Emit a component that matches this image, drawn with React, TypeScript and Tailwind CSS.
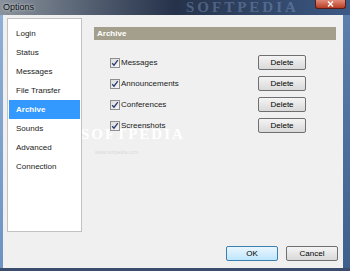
import React from "react";

const items = ["Login", "Status", "Messages", "File Transfer", "Archive", "Sounds", "Advanced", "Connection"];
const archives = ["Messages", "Announcements", "Conferences", "Screenshots"];

function Check() {
  return (
    <span className="flex h-[10px] w-[10px] items-center justify-center border border-[#8e8f8f] bg-gradient-to-br from-[#dcdcdc] to-[#f6f6f6]">
      <svg width="8" height="8" viewBox="0 0 8 8">
        <path d="M1.2 4.2 L3 6.2 L6.8 1.2" fill="none" stroke="#2a3a6e" strokeWidth="1.3" />
      </svg>
    </span>
  );
}

function Btn({ label, primary, w }: { label: string; primary?: boolean; w: string }) {
  return (
    <button
      className={`flex h-[15px] ${w} items-center justify-center rounded-[2px] border text-[8px] text-black ${
        primary
          ? "border-[#3c7fb1] bg-gradient-to-b from-[#eaf6fd] to-[#bee6fd]"
          : "border-[#707070] bg-gradient-to-b from-[#f4f4f4] to-[#d9d9d9]"
      }`}
    >
      {label}
    </button>
  );
}

export default function App() {
  return (
    <div
      className="relative flex h-[271px] w-[350px] flex-col overflow-hidden bg-[#2b3d5e]"
      style={{ fontFamily: '"Liberation Sans", Arial, sans-serif' }}
    >
      {/* title bar */}
      <div className="relative flex h-[15px] items-start bg-gradient-to-r from-[#8a939c] via-[#26324a] to-[#3c5a86]">
        <span className="relative z-10 pl-[3px] pt-[2px] text-[9px] leading-[10px] text-[#101010] [text-shadow:0_0_3px_#e8eef4]">
          Options
        </span>
        <span
          className="absolute left-[186px] top-[0px] text-[15px] leading-[15px] font-bold tracking-[3px] text-[#8aa6cc]/40"
          style={{ fontFamily: '"Liberation Serif", serif' }}
        >
          SOFTPEDIA
        </span>
        <div className="absolute right-[4px] top-0 flex h-[9px] w-[31px] items-center justify-center rounded-b-[3px] border border-t-0 border-[#5b1e16] bg-gradient-to-b from-[#e08a78] to-[#b83a22]">
          <svg width="7" height="6" viewBox="0 0 7 6">
            <path d="M1 0.5 L6 5.5 M6 0.5 L1 5.5" stroke="#ffffff" strokeWidth="1.4" />
          </svg>
        </div>
      </div>

      <div className="flex flex-1">
        <div className="w-[3px] bg-gradient-to-b from-[#8fb0d6] to-[#6c93c4]" />
        <div className="relative flex h-[253px] w-[340px] flex-col bg-[#f0f0f0]">
          {/* watermark, drawn under the content */}
          <span
            className="absolute left-[78px] top-[112px] text-[15px] leading-[15px] font-bold tracking-[2px] text-white"
            style={{ fontFamily: '"Liberation Serif", serif' }}
          >
            SOFTPEDIA
          </span>
          <span className="absolute left-[92px] top-[134px] text-[5px] leading-[6px] text-[#dadada]">www.softpedia.com</span>

          <div className="relative flex flex-1 pt-[3px] pl-[4px]">
            {/* left list */}
            <div className="flex h-[214px] w-[75px] flex-col border border-[#c2c2c2] bg-white pt-[5px]">
              {items.map((it) => (
                <div
                  key={it}
                  className={`mx-[1px] flex h-[19px] items-center pl-[7px] text-[8px] ${
                    it === "Archive" ? "bg-[#3399ff] font-bold text-white" : "text-[#1a1a1a]"
                  }`}
                >
                  {it}
                </div>
              ))}
            </div>

            {/* right panel */}
            <div className="ml-[12px] flex w-[242px] flex-col pt-[9px]">
              <div className="flex h-[13px] items-center bg-[#a49f8d] pl-[3px] text-[8px] font-bold text-white">
                Archive
              </div>
              <div className="mt-[12px] flex flex-col">
                {archives.map((a) => (
                  <div key={a} className="flex h-[21px] items-center">
                    <div className="ml-[16px] flex items-center gap-[1px]">
                      <Check />
                      <span className="text-[8px] text-[#1a1a1a]">{a}</span>
                    </div>
                    <div className="ml-auto mr-[30px]">
                      <Btn label="Delete" w="w-[48px]" />
                    </div>
                  </div>
                ))}
              </div>
            </div>
          </div>

          <div className="relative flex justify-end gap-[8px] pb-[7px] pr-[5px]">
            <Btn label="OK" primary w="w-[52px]" />
            <Btn label="Cancel" w="w-[52px]" />
          </div>
        </div>
        <div className="flex-1 bg-gradient-to-b from-[#5d7fae] to-[#3f5f8c]" />
      </div>
      <div className="h-[3px] bg-[#3a4d6c]" />
    </div>
  );
}
